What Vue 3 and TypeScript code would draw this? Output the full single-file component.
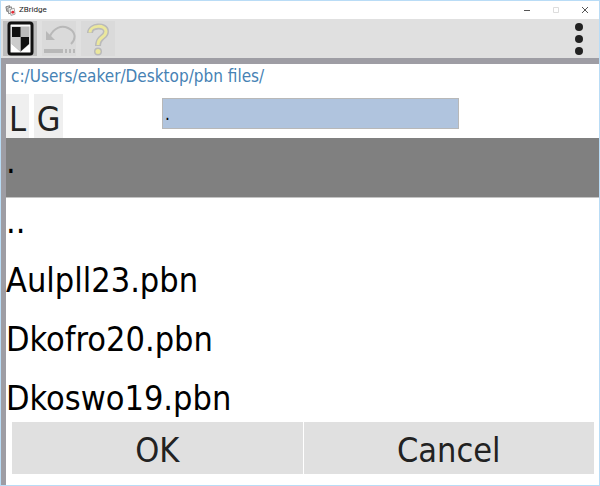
<script setup lang="ts">
import { ref } from 'vue'

const path = 'c:/Users/eaker/Desktop/pbn files/'
const files = ['.', '..', 'Aulpll23.pbn', 'Dkofro20.pbn', 'Dkoswo19.pbn']
const selected = ref('.')
</script>

<template>
  <div class="window">
    <header class="titlebar">
      <svg class="app-icon" viewBox="0 0 12 12" aria-hidden="true">
        <path d="M1 2 5 .8 6 6 2 7Z" fill="#ddd" stroke="#555" stroke-width=".8" />
        <path d="M3 3.5 7 2 8 8.5 4 9.5Z" fill="#eee" stroke="#666" stroke-width=".8" />
        <path d="M5.5 5 10 3.5 11 10 6.5 11.3Z" fill="#fff" stroke="#888" stroke-width=".8" />
        <circle cx="8.5" cy="8" r="1.6" fill="#e22b35" />
      </svg>
      <span class="title">ZBridge</span>
      <button class="win-btn" type="button" aria-label="Minimize">
        <svg viewBox="0 0 8 8"><path d="M1 4.5h6" stroke="#555" /></svg>
      </button>
      <button class="win-btn" type="button" aria-label="Maximize" disabled>
        <svg viewBox="0 0 8 8"><path d="M1.500 1.500h5v5h-5z" fill="none" stroke="#ddd" /></svg>
      </button>
      <button class="win-btn" type="button" aria-label="Close">
        <svg viewBox="0 0 8 8"><path d="M1 1l6 6M7 1 1 7" stroke="#555" /></svg>
      </button>
    </header>

    <nav class="toolbar">
      <button class="tool deal" type="button" aria-label="Deal">
        <svg viewBox="0 0 34 35">
          <rect x="6" y="2" width="23" height="31" rx="2" fill="#fff" stroke="#111" stroke-width="3" />
          <path d="M8.500 5.500h18V23l-9 8-9-8Z" fill="#bcbcbc" />
          <path d="M9 6h8.500v10H9Z" fill="#111" />
          <path d="M17.500 16H26v7l-8.500 7.500Z" fill="#111" />
          <path d="M9 16h8.500v14.500L9 23Z" fill="#ccc" />
        </svg>
      </button>
      <button class="tool" type="button" aria-label="Undo">
        <svg viewBox="0 0 34 35" fill="none" stroke="#b8b8b8">
          <path d="M8 15C12 7 19 4 26 7C33 10 35 17 29 23" stroke-width="2" />
          <path d="M4 10v9h9Z" fill="#b8b8b8" stroke="none" />
          <path d="M2 30h19M23 30h2M27 30h2M31 30h2" stroke-width="4" />
        </svg>
      </button>
      <button class="tool" type="button" aria-label="Help">
        <svg viewBox="0 0 34 35" fill="none" stroke-linejoin="round">
          <path d="M9 12C9 4 25 3 25 10.500C25 17 17 15 17 25" stroke="#bababa" stroke-width="6" />
          <circle cx="17" cy="30.500" r="4" fill="#bababa" />
          <path d="M9 11.500C9 4 25 3 25 10.500C25 17 17 15 17 24" stroke="#ebe79c" stroke-width="3" />
          <circle cx="17" cy="30.500" r="2.500" fill="#ebe79c" />
        </svg>
      </button>
      <button class="more" type="button" aria-label="More options">
        <svg viewBox="0 0 8 32" fill="#222">
          <circle cx="4" cy="4" r="4" /><circle cx="4" cy="16" r="4" /><circle cx="4" cy="28" r="4" />
        </svg>
      </button>
    </nav>

    <main class="panel">
      <p class="path">{{ path }}</p>
      <div class="controls">
        <button class="drive" type="button">L</button>
        <button class="drive wide" type="button">G</button>
        <input v-model="selected" class="name" type="text" aria-label="File name" />
      </div>
      <ul class="files">
        <li v-for="file in files" :key="file">
          <button
            class="file"
            :class="{ selected: file === selected }"
            type="button"
            @click="selected = file"
          >{{ file }}</button>
        </li>
      </ul>
      <footer class="actions">
        <button type="button">OK</button>
        <button type="button">Cancel</button>
      </footer>
    </main>
  </div>
</template>

<style>
body {
  margin: 0;
}
</style>

<style scoped>
.window {
  box-sizing: border-box;
  display: flex;
  flex-direction: column;
  height: 100vh;
  border: 1px solid #b9dcf6;
  background: #fff;
  color: #000;
  font-family: "DejaVu Sans Condensed", "Noto Sans", sans-serif;
}
button {
  margin: 0;
  padding: 0;
  border: 0;
  background: none;
  color: inherit;
  font: inherit;
}
svg {
  display: block;
}
.titlebar {
  display: flex;
  align-items: center;
  height: 18px;
  padding-left: 4px;
}
.app-icon {
  width: 11px;
  height: 11px;
}
.title {
  flex: 1;
  padding-left: 3px;
  font: 8px/16px Roboto, "Noto Sans", sans-serif;
  color: #222;
}
.win-btn {
  display: grid;
  place-items: center;
  width: 29px;
  height: 18px;
}
.win-btn svg {
  width: 8px;
  height: 8px;
}
.toolbar {
  display: flex;
  align-items: center;
  gap: 5px;
  height: 39px;
  padding: 0 16px 0 2px;
  background: #e0e0e0;
}
.tool {
  width: 34px;
  height: 35px;
  background: #dadada;
}
.tool.deal {
  background: #bdbdbd;
}
.tool svg {
  width: 34px;
  height: 35px;
}
.more {
  margin-left: auto;
}
.more svg {
  width: 8px;
  height: 32px;
}
.panel {
  display: flex;
  flex: 1;
  flex-direction: column;
  min-height: 0;
  border-top: 6px solid #9e9da4;
  border-left: 5px solid #9e9da4;
}
.path {
  margin: 0;
  padding-left: 5px;
  font-size: 17px;
  line-height: 24px;
  color: #4682b4;
}
.controls {
  display: flex;
  gap: 5px;
  padding-top: 6px;
}
.drive {
  width: 23px;
  height: 44px;
  background: #efefef;
  color: #222;
  font-size: 34px;
  line-height: 50px;
}
.drive.wide {
  width: 29px;
}
.name {
  box-sizing: border-box;
  width: 50%;
  height: 31px;
  margin: 4px 0 0 94px;
  padding: 0 2px;
  border: 1px solid #b8b8b8;
  border-radius: 0;
  background: #b0c4de;
  color: #000;
  font: 17px "DejaVu Sans Condensed", "Noto Sans", sans-serif;
}
.files {
  flex: 1;
  min-height: 0;
  margin: 0;
  padding: 0;
  overflow: hidden;
  list-style: none;
}
.file {
  display: block;
  width: 100%;
  height: 59px;
  padding-bottom: 12px;
  font-size: 34px;
  line-height: 47px;
  text-align: left;
}
.file.selected {
  height: 60px;
  border-bottom: 1px solid #c4c4c4;
  background: #808080;
}
.actions {
  display: grid;
  grid-template-columns: 1fr 1fr;
  gap: 1px;
  padding: 0 5px 11px 6px;
}
.actions button {
  height: 52px;
  padding-top: 4px;
  background: #e0e0e0;
  color: #222;
  font-size: 34px;
  line-height: 48px;
}
</style>
